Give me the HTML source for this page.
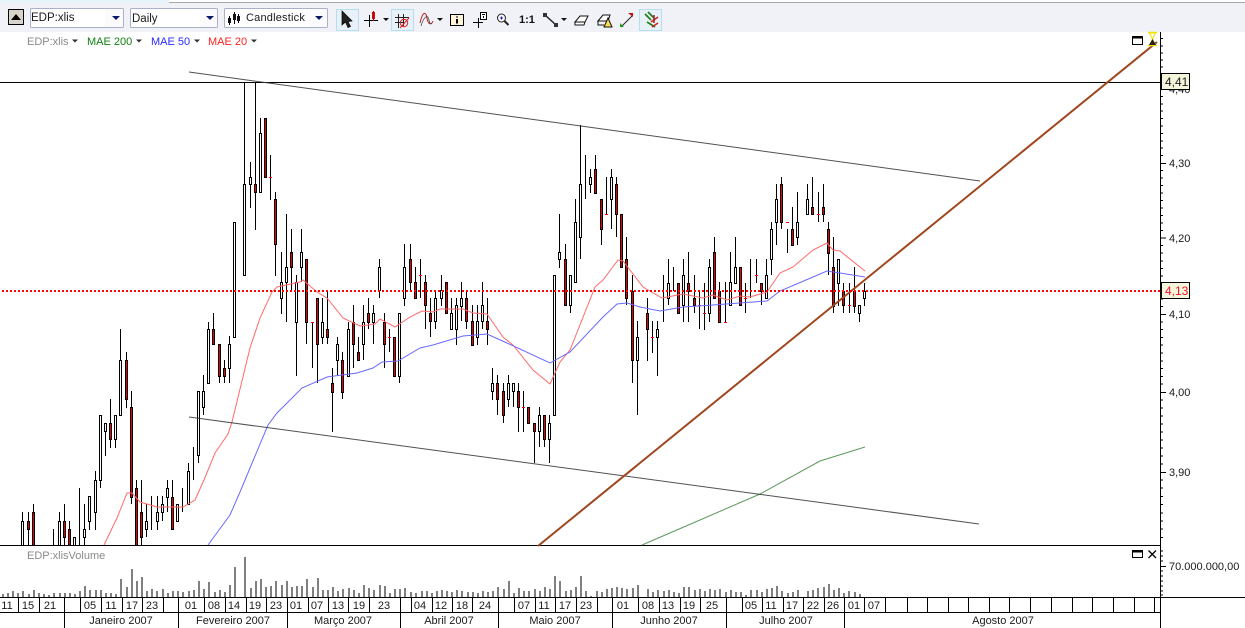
<!DOCTYPE html>
<html><head><meta charset="utf-8"><style>
html,body{margin:0;padding:0;width:1245px;height:628px;overflow:hidden;background:#fff}
svg{display:block}
text{font-family:"Liberation Sans",sans-serif;font-size:11px;fill:#1a1a1a}
.d text{text-anchor:middle}
</style></head><body>
<svg width="1245" height="628" viewBox="0 0 1245 628" xmlns="http://www.w3.org/2000/svg">
<!-- toolbar -->
<rect x="0" y="0" width="1245" height="32" fill="#f0f2f8"/>
<rect x="0" y="0" width="169" height="3" fill="#e6f3fa"/><rect x="169" y="0" width="1076" height="2" fill="#fff"/><rect x="169" y="2" width="1076" height="1" fill="#a8a8a8"/>
<rect x="8.500" y="9.500" width="15" height="15" fill="#d8d4cc" stroke="#000"/><path d="M11 20L16 14L21 20z" fill="#000"/>
<g fill="#fff" stroke="#a9b2c8"><rect x="30.500" y="8.500" width="93" height="19" rx="1"/><rect x="130.500" y="8.500" width="87" height="19" rx="1"/><rect x="224.500" y="8.500" width="103" height="19" rx="1"/></g>
<rect x="105" y="9" width="18" height="18" fill="#f8f9fc" opacity=".6"/>
<rect x="200" y="9" width="17" height="18" fill="#f8f9fc" opacity=".6"/>
<rect x="310" y="9" width="17" height="18" fill="#f8f9fc" opacity=".6"/>
<path d="M112 16h8l-4 4zM206 16h8l-4 4zM315 16h8l-4 4z" fill="#0a1a6a"/>
<text x="31" y="21" style="font-size:11.500px">EDP:xlis</text><text x="132" y="22" style="font-size:11.500px">Daily</text><text x="246" y="21" style="font-size:11px;letter-spacing:.2px">Candlestick</text>
<path d="M229.500 16v9M234.500 12v12M238.500 14v9" stroke="#000"/><path d="M228 18h3v5h-3zM233 14h3v6h-3zM237 16h3v5h-3z" fill="#111"/>
<!-- row 2 labels -->
<text x="27" y="45" style="fill:#8a8a8a">EDP:xlis</text><text x="87" y="45" style="fill:#108010">MAE 200</text><text x="151" y="45" style="fill:#2a2aff">MAE 50</text><text x="208" y="45" style="fill:#ff2020">MAE 20</text>
<path d="M72 39.500h6l-3 3zM136 39.500h6l-3 3zM194 39.500h6l-3 3zM251 39.500h6l-3 3z" fill="#333"/>
<!-- toolbar icons -->
<g fill="#e8f1f8" stroke="#b4dff2"><rect x="336.500" y="9.500" width="22" height="21"/><rect x="391.500" y="9.500" width="22" height="21"/><rect x="639.500" y="9.500" width="22" height="21"/></g>
<path d="M342 11V25L345.500 22L348 27.500L350.500 26.500L348 21.500L352 21z" fill="#222" stroke="#000" stroke-width=".7"/>
<path d="M364 20.500H378M369.500 15V27" stroke="#000" fill="none"/><rect x="372" y="12" width="3" height="7" fill="#d01010"/><path d="M373.500 11v10" stroke="#b00"/>
<path d="M383 18h6l-3 3zM437 18h6l-3 3zM561 18h6l-3 3z" fill="#111"/>
<path d="M398.500 14v14M403.500 14v12M395 17.500h14M395 22.500h8" stroke="#222" fill="none"/><circle cx="404" cy="23" r="3.700" fill="none" stroke="#e02020"/><path d="M400 28L409 18" stroke="#e02020"/>
<path d="M420 23C423 10 426 12 427 18C428 24 431 26 433 21" fill="none" stroke="#c02020"/><path d="M421 26C424 16 428 14 429 20C430 25 431 24 432 23" fill="none" stroke="#333" stroke-width=".7"/>
<rect x="450.500" y="14.500" width="13" height="11" fill="#fff5d8" stroke="#000"/><path d="M457 16.500v1M457 19v4.500" stroke="#000" stroke-width="2"/>
<path d="M473 22.500H483M478.500 18V28" stroke="#000"/><rect x="480.500" y="12.500" width="6" height="7" fill="#fff" stroke="#000"/><rect x="482" y="14" width="3" height="1" fill="#000"/><rect x="483" y="16" width="1" height="2" fill="#000"/>
<circle cx="501.500" cy="18" r="4" fill="#f8f8ff" stroke="#222"/><path d="M504.500 21L508.500 25" stroke="#222" stroke-width="2"/><path d="M500 18h3M501.500 16.500v3" stroke="#22c"/>
<text x="519" y="23" style="font-size:11px;font-weight:bold;fill:#111">1:1</text>
<path d="M545 15L556 25" stroke="#222" stroke-width="1.500"/><path d="M543 13h4v4h-4zM554 23h4v4h-4z" fill="#333"/>
<path d="M575 22L580 16H588L585 22zM575 22V25H584L585 22" fill="#fff" stroke="#111"/>
<path d="M598 21L603 15H610L608 21z" fill="#fff" stroke="#111"/><path d="M604 27L608 18L612 27z" fill="#f6e050" stroke="#111"/><path d="M598 21V25H604" fill="none" stroke="#111"/>
<path d="M621 27L632 16" stroke="#222"/><path d="M628 13h5v4z" fill="#c01010"/><path d="M620 23v4h4z" fill="#20a020"/>
<path d="M645 14L651 20M648 12L654 18M647 22L655 27" stroke="#208020" stroke-width="1.700" fill="none"/><path d="M651 22L658 17M652 27L658 23" stroke="#d02020" stroke-width="1.500" fill="none"/><path d="M654 15v8" stroke="#a02020" stroke-width="1.500"/>
<!-- panel frames -->
<path d="M0 82.500H1161" stroke="#000"/>
<path d="M0 545.500H1160M0 597.500H1245M0 612.500H1160M1160.500 32V628" stroke="#000"/>
<g id="candles" shape-rendering="crispEdges">
<path fill="none" stroke="#000" d="M22.500 512V545M28.500 512V545M33.500 504V545M53.500 529V545M59.500 512V545M64.500 504V545M69.500 521V545M74.500 537V545M79.500 488V545M84.500 504V545M89.500 496V530M95.500 471V530M100.500 415V488M105.500 423V456M110.500 399V448M115.500 415V448M120.500 329V415M126.500 352V408M131.500 391V504M136.500 480V545M141.500 480V545M146.500 504V537M151.500 496V530M157.500 496V530M162.500 496V521M167.500 480V512M172.500 480V530M177.500 504V521M182.500 488V512M188.500 463V504M193.500 447V480M198.500 391V463M203.500 375V415M208.500 322V383M213.500 313V344M219.500 344V383M224.500 360V383M229.500 336V383M244.500 82V275M250.500 162V208M255.500 82V230M260.500 118V192M270.500 155V200M275.500 192V276M281.500 252V314M286.500 214V322M291.500 229V290M296.500 275V376M301.500 229V282M306.500 259V344M312.500 322V368M317.500 298V383M322.500 298V344M327.500 291V344M332.500 368V432M337.500 337V376M342.500 352V399M348.500 322V376M353.500 305V368M358.500 337V360M363.500 305V360M368.500 298V329M373.500 305V344M379.500 259V298M384.500 313V368M389.500 329V352M394.500 337V376M399.500 313V383M404.500 244V306M410.500 244V290M415.500 267V298M420.500 259V298M425.500 275V329M430.500 298V337M435.500 290V329M441.500 275V306M446.500 282V313M451.500 298V329M456.500 298V345M461.500 282V321M466.500 290V329M472.500 305V345M477.500 305V345M482.500 282V329M487.500 298V345M492.500 368V400M497.500 375V415M503.500 383V423M508.500 375V407M513.500 383V407M518.500 383V432M523.500 391V432M528.500 407V423M534.500 423V463M539.500 407V447M544.500 415V447M549.500 415V463M559.500 214V268M565.500 244V305M570.500 275V313M575.500 199V282M580.500 125V259M585.500 155V199M590.500 169V193M595.500 155V193M601.500 199V245M606.500 177V214M611.500 169V229M616.500 177V237M621.500 214V267M626.500 237V305M632.500 275V383M637.500 321V415M647.500 298V361M652.500 321V353M657.500 321V376M663.500 275V322M668.500 259V305M673.500 267V291M678.500 283V313M683.500 259V322M688.500 252V322M694.500 275V313M699.500 291V329M704.500 283V330M709.500 259V322M714.500 237V298M719.500 282V322M725.500 282V322M730.500 252V305M735.500 237V283M740.500 267V305M745.500 283V313M750.500 259V298M756.500 259V283M761.500 283V305M766.500 259V298M771.500 222V275M776.500 184V245M781.500 177V229M787.500 229V253M792.500 207V245M797.500 192V245M807.500 184V214M812.500 177V214M818.500 192V222M823.500 184V222M828.500 222V275M833.500 237V313M838.500 259V306M843.500 283V313M849.500 283V313M854.500 267V313M859.500 306V322M864.500 283V306"/>
<path fill="#fff" stroke="#000" d="M21.500 521.500h2v24h-2zM58.500 521.500h2v24h-2zM73.500 537.500h2v8h-2zM83.500 529.500h2v8h-2zM88.500 496.500h2v25h-2zM94.500 480.500h2v32h-2zM99.500 415.500h2v65h-2zM104.500 423.500h2v8h-2zM114.500 415.500h2v24h-2zM119.500 360.500h2v55h-2zM145.500 521.500h2v8h-2zM156.500 512.500h2v9h-2zM161.500 504.500h2v8h-2zM166.500 488.500h2v9h-2zM176.500 504.500h2v17h-2zM187.500 471.500h2v33h-2zM197.500 391.500h2v64h-2zM202.500 391.500h2v16h-2zM207.500 329.500h2v54h-2zM228.500 344.500h2v24h-2zM233.500 222.500h2v115h-2zM243.500 184.500h2v91h-2zM249.500 177.500h2v7h-2zM259.500 133.500h2v59h-2zM280.500 282.500h2v16h-2zM285.500 267.500h2v15h-2zM295.500 282.500h2v40h-2zM300.500 252.500h2v15h-2zM321.500 322.500h2v15h-2zM336.500 344.500h2v16h-2zM347.500 329.500h2v47h-2zM362.500 322.500h2v22h-2zM372.500 313.500h2v9h-2zM378.500 267.500h2v23h-2zM398.500 313.500h2v63h-2zM403.500 267.500h2v31h-2zM434.500 298.500h2v23h-2zM440.500 290.500h2v8h-2zM450.500 313.500h2v16h-2zM455.500 305.500h2v24h-2zM460.500 298.500h2v8h-2zM476.500 321.500h2v16h-2zM481.500 305.500h2v16h-2zM491.500 383.500h2v8h-2zM507.500 383.500h2v16h-2zM512.500 383.500h2v8h-2zM538.500 415.500h2v16h-2zM548.500 423.500h2v16h-2zM553.500 275.500h2v140h-2zM558.500 252.500h2v7h-2zM569.500 275.500h2v30h-2zM574.500 222.500h2v60h-2zM579.500 184.500h2v53h-2zM589.500 177.500h2v7h-2zM610.500 177.500h2v22h-2zM636.500 337.500h2v23h-2zM656.500 329.500h2v8h-2zM667.500 283.500h2v15h-2zM682.500 275.500h2v30h-2zM708.500 267.500h2v46h-2zM729.500 282.500h2v23h-2zM734.500 267.500h2v16h-2zM765.500 275.500h2v23h-2zM770.500 229.500h2v30h-2zM775.500 199.500h2v23h-2zM796.500 222.500h2v15h-2zM806.500 199.500h2v15h-2zM837.500 259.500h2v24h-2zM858.500 305.500h2v8h-2zM863.500 291.500h2v7h-2z"/>
<path fill="#e80000" stroke="#000" d="M27.500 521.500h2v8h-2zM32.500 512.500h2v33h-2zM63.500 521.500h2v16h-2zM68.500 529.500h2v16h-2zM109.500 423.500h2v16h-2zM125.500 360.500h2v39h-2zM130.500 407.500h2v90h-2zM135.500 488.500h2v57h-2zM140.500 512.500h2v25h-2zM171.500 497.500h2v32h-2zM212.500 329.500h2v15h-2zM218.500 344.500h2v32h-2zM223.500 368.500h2v8h-2zM254.500 184.500h2v8h-2zM264.500 118.500h2v59h-2zM274.500 199.500h2v45h-2zM290.500 252.500h2v15h-2zM305.500 259.500h2v63h-2zM316.500 298.500h2v46h-2zM326.500 329.500h2v8h-2zM331.500 383.500h2v9h-2zM341.500 360.500h2v32h-2zM352.500 322.500h2v22h-2zM357.500 352.500h2v8h-2zM367.500 313.500h2v9h-2zM383.500 322.500h2v22h-2zM393.500 337.500h2v39h-2zM409.500 259.500h2v23h-2zM414.500 282.500h2v16h-2zM424.500 282.500h2v23h-2zM429.500 313.500h2v8h-2zM445.500 282.500h2v31h-2zM465.500 298.500h2v23h-2zM471.500 321.500h2v24h-2zM486.500 321.500h2v8h-2zM496.500 383.500h2v16h-2zM502.500 391.500h2v24h-2zM517.500 391.500h2v16h-2zM527.500 407.500h2v16h-2zM533.500 423.500h2v8h-2zM543.500 415.500h2v24h-2zM564.500 259.500h2v46h-2zM594.500 169.500h2v24h-2zM600.500 199.500h2v30h-2zM615.500 184.500h2v30h-2zM620.500 214.500h2v53h-2zM625.500 259.500h2v39h-2zM631.500 291.500h2v69h-2zM646.500 313.500h2v16h-2zM677.500 283.500h2v30h-2zM687.500 283.500h2v8h-2zM693.500 298.500h2v7h-2zM713.500 252.500h2v46h-2zM718.500 291.500h2v31h-2zM739.500 267.500h2v38h-2zM760.500 283.500h2v8h-2zM780.500 184.500h2v38h-2zM791.500 229.500h2v16h-2zM811.500 207.500h2v7h-2zM822.500 207.500h2v7h-2zM827.500 229.500h2v24h-2zM832.500 267.500h2v39h-2zM842.500 291.500h2v14h-2zM853.500 291.500h2v15h-2z"/>
<path fill="none" stroke="#f00" d="M269 177.500h3M311 322.500h3M388 337.500h3M419 275.500h3M522 407.500h3M605 214.500h3M651 337.500h3M698 305.500h3M703 313.500h3M724 322.500h3M744 298.500h3M755 275.500h3M786 222.500h3M817 214.500h3M848 305.500h3"/>
</g>
<!-- moving averages -->
<polyline fill="none" stroke="#ff6a6a" points="104,545 117,518 127,493 132,493 140,502 157,507 173,507 183,507 195,500 204,480 215,453 228,434 232,422 250,348 260,318 272,292 277,287 300,282 303,280 317,292 327,298 343,318 360,326 375,324 380,319 395,327 410,317 422,311 433,312 440,309 463,309 473,313 487,314 503,337 513,345 533,370 550,384 560,362 570,350 595,287 603,280 618,260 623,261 630,270 643,287 662,298 683,294 703,298 713,295 727,300 740,296 750,297 767,292 780,273 793,267 813,250 827,243 833,250 840,251 865,271"/>
<polyline fill="none" stroke="#6a6aff" points="208,545 230,515 240,492 268,425 277,413 302,388 327,377 357,373 373,368 382,362 398,361 420,348 433,345 463,336 487,334 507,343 550,363 570,352 603,317 617,304 627,303 640,307 660,311 683,307 713,305 767,301 780,291 813,277 827,271 840,273 865,277"/>
<polyline fill="none" stroke="#5f9a5f" points="642,545 700,520 760,494 820,461 865,447"/>
<path d="M189 72L980 181M189 417L979 524" stroke="#333" stroke-width="1" fill="none" opacity=".85"/>
<path d="M538 546L1157 42" stroke="#a0461e" stroke-width="2" fill="none"/>
<path d="M2 291H1160" stroke="#f00" stroke-width="2" stroke-dasharray="2 2" fill="none"/>
<!-- axis ticks -->
<path stroke="#000" fill="none" shape-rendering="crispEdges" d="M1161 38.500h2M1161 46h2M1161 53h2M1161 60h2M1161 67h2M1161 74.500h2M1161 82h2M1161 96.500h2M1161 104h2M1161 111h2M1161 118.500h2M1161 126h2M1161 133.500h2M1161 141h2M1161 148h2M1161 155.500h2M1161 170.500h2M1161 178h2M1161 185.500h2M1161 193h2M1161 200.500h2M1161 208h2M1161 215.500h2M1161 223h2M1161 230.500h2M1161 245.500h2M1161 253h2M1161 261h2M1161 268.500h2M1161 276h2M1161 283.500h2M1161 291h2M1161 299h2M1161 306.500h2M1161 322h2M1161 329.500h2M1161 337.500h2M1161 345h2M1161 353h2M1161 361h2M1161 368.500h2M1161 376.500h2M1161 384h2M1161 400h2M1161 408h2M1161 416h2M1161 424h2M1161 432h2M1161 440h2M1161 448h2M1161 456h2M1161 464h2M1161 480h2M1161 488h2M1161 496.500h2M1161 504.500h2M1161 513h2M1161 521h2M1161 529h2M1161 537.500h2M1161 163.500h5M1161 238h5M1161 314.500h5M1161 392.500h5M1161 472.500h5M1161 89.500h5M1161 566.500h5M1161 551h2M1161 556h2M1161 561h2M1161 571h2M1161 576h2M1161 581h2M1161 586h2M1161 591h2M1161 595h2"/>
<g><text x="1169" y="93">4,40</text><text x="1169" y="167">4,30</text><text x="1169" y="242">4,20</text><text x="1169" y="318">4,10</text><text x="1169" y="396">4,00</text><text x="1169" y="476">3,90</text><text x="1169" y="570">70.000.000,00</text></g>
<rect x="1161.500" y="73.500" width="28" height="16" fill="#f5f5dc" stroke="#000"/><text x="1165" y="86" style="font-size:12px">4,41</text>
<rect x="1161.500" y="282.500" width="28" height="16" fill="#f5f5dc" stroke="#000"/><text x="1165" y="295" style="font-size:12px;fill:#f01030">4,13</text>
<!-- panel buttons -->
<rect x="1132.500" y="36.500" width="10" height="8" fill="#fff" stroke="#000"/><path d="M1132 37.500h11" stroke="#000" stroke-width="2"/>
<path d="M1148 32.500h9M1148 45.500h9" stroke="#f5e000" stroke-width="1.500"/><path d="M1149.500 33L1155.500 33L1152.500 39L1155.500 45L1149.500 45L1152.500 39z" fill="#fff" stroke="#f5e000"/><path d="M1149 45L1152.500 39L1156 45z" fill="#222"/>
<rect x="1132.500" y="550.500" width="10" height="7" fill="#fff" stroke="#000"/><path d="M1132 551.500h11" stroke="#000" stroke-width="2"/>
<path d="M1148.500 550.500L1156 558M1156 550.500L1148.500 558" stroke="#000" stroke-width="1.300"/>
<text x="27" y="559" style="fill:#8a8a8a">EDP:xlisVolume</text>
<!-- volume bars -->
<path stroke="#808080" stroke-width="2" fill="none" shape-rendering="crispEdges" d="M3 594V597M8 593V597M13 591V597M18 593V597M23 591V597M29 594V597M34 590V597M39 593V597M44 594V597M49 595V597M54 593V597M60 593V597M65 593V597M70 593V597M75 594V597M80 591V597M85 586V597M90 590V597M96 590V597M101 590V597M106 593V597M111 593V597M116 594V597M121 579V597M127 587V597M132 569V597M137 581V597M142 577V597M147 591V597M152 589V597M157 591V597M163 589V597M168 593V597M173 591V597M178 591V597M183 592V597M189 591V597M194 590V597M199 581V597M204 589V597M209 582V597M215 592V597M220 590V597M225 592V597M230 585V597M235 567V597M245 557V597M251 588V597M256 581V597M261 579V597M266 587V597M271 586V597M276 581V597M282 585V597M287 581V597M292 587V597M297 586V597M302 586V597M307 579V597M313 587V597M318 578V597M323 590V597M328 590V597M333 587V597M338 591V597M343 589V597M349 588V597M354 590V597M359 593V597M364 585V597M369 588V597M374 590V597M380 585V597M385 586V597M390 593V597M395 589V597M400 589V597M405 588V597M411 592V597M416 593V597M422 591V597M427 591V597M432 593V597M437 591V597M442 590V597M447 591V597M452 592V597M457 590V597M462 591V597M468 592V597M473 592V597M478 593V597M483 591V597M488 592V597M493 591V597M498 587V597M504 589V597M509 581V597M514 593V597M519 588V597M524 591V597M529 591V597M535 589V597M540 591V597M545 587V597M550 589V597M555 576V597M560 581V597M566 591V597M571 590V597M576 587V597M581 576V597M586 591V597M591 596V597M597 591V597M602 592V597M607 589V597M612 588V597M617 587V597M622 588V597M627 589V597M633 588V597M638 585V597M648 589V597M653 592V597M658 590V597M664 591V597M669 590V597M674 592V597M679 593V597M684 587V597M689 587V597M695 590V597M700 589V597M705 591V597M710 589V597M715 590V597M720 589V597M726 592V597M731 590V597M736 592V597M741 592V597M746 595V597M751 590V597M757 590V597M762 592V597M767 589V597M772 588V597M777 586V597M782 591V597M788 593V597M793 592V597M798 590V597M808 591V597M813 590V597M818 588V597M824 587V597M829 584V597M834 590V597M839 588V597M844 593V597M849 591V597M855 592V597M860 594V597"/>
<!-- date grid -->
<path stroke="#000" fill="none" shape-rendering="crispEdges" d="M18.500 598V612M39.500 598V612M64.500 598V628M80.500 598V612M101.500 598V612M122.500 598V612M142.500 598V612M163.500 598V612M178.500 598V628M204.500 598V612M225.500 598V612M246.500 598V612M266.500 598V612M287.500 598V628M308.500 598V612M328.500 598V612M348.500 598V612M369.500 598V612M400.500 598V628M411.500 598V612M432.500 598V612M452.500 598V612M472.500 598V612M498.500 598V628M514.500 598V612M535.500 598V612M555.500 598V612M576.500 598V612M597.500 598V612M612.500 598V628M638.500 598V612M659.500 598V612M680.500 598V612M700.500 598V612M726.500 598V628M742.500 598V612M762.500 598V612M783.500 598V612M803.500 598V612M824.500 598V612M844.500 598V628M864.500 598V612M885.500 598V612M907.500 598V612M927.500 598V612M948.500 598V612M968.500 598V612M989.500 598V612M1009.500 598V612M1030.500 598V612M1051.500 598V612M1072.500 598V612M1092.500 598V612M1113.500 598V612M1134.500 598V612M1154.500 598V612"/>
<g class="d"><text x="7" y="609">11</text><text x="28" y="609">15</text><text x="50" y="609">21</text><text x="90" y="609">05</text><text x="111" y="609">11</text><text x="132" y="609">17</text><text x="152" y="609">23</text><text x="191" y="609">01</text><text x="214" y="609">08</text><text x="234" y="609">14</text><text x="255" y="609">19</text><text x="276" y="609">23</text><text x="296" y="609">01</text><text x="317" y="609">07</text><text x="338" y="609">13</text><text x="359" y="609">19</text><text x="384" y="609">23</text><text x="420" y="609">04</text><text x="441" y="609">12</text><text x="462" y="609">18</text><text x="485" y="609">24</text><text x="524" y="609">07</text><text x="544" y="609">11</text><text x="565" y="609">17</text><text x="586" y="609">23</text><text x="623" y="609">01</text><text x="648" y="609">08</text><text x="668" y="609">13</text><text x="689" y="609">19</text><text x="712" y="609">25</text><text x="751" y="609">05</text><text x="771" y="609">11</text><text x="792" y="609">17</text><text x="813" y="609">22</text><text x="833" y="609">26</text><text x="854" y="609">01</text><text x="874" y="609">07</text>
<text x="121" y="624">Janeiro 2007</text><text x="233" y="624">Fevereiro 2007</text><text x="343" y="624">Março 2007</text><text x="449" y="624">Abril 2007</text><text x="555" y="624">Maio 2007</text><text x="669" y="624">Junho 2007</text><text x="786" y="624">Julho 2007</text><text x="1003" y="624">Agosto 2007</text></g>
</svg>
</body></html>
